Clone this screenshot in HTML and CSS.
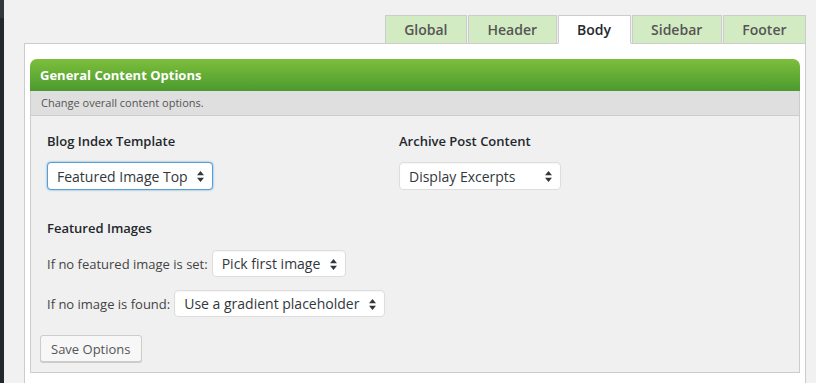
FILE: index.html
```html
<!DOCTYPE html>
<html lang="en">
<head>
  <meta charset="UTF-8">
  <title>Theme Options - Body</title>
  <link rel="stylesheet" href="styles.css">
</head>
<body>
  <div class="adminmenu"></div>

  <div class="wrap">
    <ul class="tabs">
      <li class="tab">Global</li>
      <li class="tab">Header</li>
      <li class="tab active">Body</li>
      <li class="tab">Sidebar</li>
      <li class="tab">Footer</li>
    </ul>

    <div class="panel">
      <div class="box">
        <h3 class="box-title">General Content Options</h3>
        <div class="box-desc">Change overall content options.</div>

        <form class="box-body" onsubmit="return false;">
          <div class="columns">
            <div class="field">
              <h4>Blog Index Template</h4>
              <span class="select-wrap">
                <select class="focused">
                  <option>Featured Image Top</option>
                </select>
                <svg class="arrows" width="7" height="11" viewBox="0 0 7 11"><path d="M3.5 0L7 4.3H0z M3.5 11L0 6.7h7z" fill="#32373c"/></svg>
              </span>
            </div>
            <div class="field">
              <h4>Archive Post Content</h4>
              <span class="select-wrap">
                <select class="archive">
                  <option>Display Excerpts</option>
                </select>
                <svg class="arrows" width="7" height="11" viewBox="0 0 7 11"><path d="M3.5 0L7 4.3H0z M3.5 11L0 6.7h7z" fill="#32373c"/></svg>
              </span>
            </div>
          </div>

          <div class="field images">
            <h4>Featured Images</h4>
            <div class="row">
              <label>If no featured image is set:</label>
              <span class="select-wrap">
                <select>
                  <option>Pick first image</option>
                </select>
                <svg class="arrows" width="7" height="11" viewBox="0 0 7 11"><path d="M3.5 0L7 4.3H0z M3.5 11L0 6.7h7z" fill="#32373c"/></svg>
              </span>
            </div>
            <div class="row">
              <label>If no image is found:</label>
              <span class="select-wrap">
                <select>
                  <option>Use a gradient placeholder</option>
                </select>
                <svg class="arrows" width="7" height="11" viewBox="0 0 7 11"><path d="M3.5 0L7 4.3H0z M3.5 11L0 6.7h7z" fill="#32373c"/></svg>
              </span>
            </div>
          </div>

          <div class="actions">
            <button type="submit">Save Options</button>
          </div>
        </form>
      </div>
    </div>
  </div>
</body>
</html>
```

FILE: styles.css
```css
html, body {
  height: 100%;
}

body {
  margin: 0;
  display: flex;
  background: #f1f1f1;
  font-family: 'Open Sans', 'Noto Sans', sans-serif;
  color: #444;
  overflow: hidden;
}

.adminmenu {
  width: 4px;
  flex-shrink: 0;
  background: linear-gradient(to bottom, #32373c 0, #32373c 18px, #23282d 18px);
}

.wrap {
  flex: 1;
  margin: 15px 10px 0 20px;
}

.tabs {
  list-style: none;
  margin: 0;
  padding: 0;
  display: flex;
  justify-content: flex-end;
  position: relative;
  z-index: 1;
}

.tab {
  height: 27px;
  line-height: 27px;
  padding: 0 18.5px;
  margin-left: 1px;
  margin-bottom: -1px;
  background: #d3ebc3;
  border: 1px solid #ccc;
  font-size: 14px;
  font-weight: 600;
  color: #555;
  cursor: pointer;
}

.tab.active {
  background: #fff;
  color: #23282d;
  border-bottom-color: #fff;
}

.panel {
  background: #fff;
  border: 1px solid #ccc;
  padding: 15px 5px 20px;
}

.box-title {
  margin: 0;
  height: 32px;
  line-height: 32px;
  padding: 0 10px;
  border-radius: 7px 7px 0 0;
  background: linear-gradient(to bottom, #7dbf3b, #4b9a2f);
  color: #fff;
  font-size: 13px;
  font-weight: 700;
}

.box-desc {
  height: 24px;
  line-height: 24px;
  padding: 0 10px;
  background: #dfdfdf;
  border: 1px solid #ccc;
  border-top: none;
  font-size: 11px;
  color: #555;
}

.box-body {
  margin: 0;
  background: #f0f0f0;
  border: 1px solid #ccc;
  border-top: none;
  padding: 16px 0 10px;
}

.columns {
  display: grid;
  grid-template-columns: 352px 1fr;
}

.field {
  padding-left: 16px;
}

.field h4 {
  margin: 0 0 12px;
  font-size: 13px;
  line-height: 18px;
  font-weight: 600;
  color: #23282d;
}

.images {
  margin-top: 29px;
}

.images h4 {
  margin-bottom: 13px;
}

.row {
  display: flex;
  align-items: center;
  gap: 4px;
  margin-bottom: 13px;
}

.row label {
  font-size: 13px;
  color: #444;
}

.select-wrap {
  position: relative;
  display: inline-block;
  vertical-align: top;
}

select {
  -webkit-appearance: none;
  appearance: none;
  display: block;
  height: 28px;
  margin: 0;
  padding: 0 24px 0 9px;
  border: 1px solid #ddd;
  border-radius: 4px;
  background: #fff;
  box-shadow: inset 0 1px 2px rgba(0,0,0,0.04);
  font-family: 'Open Sans', 'Noto Sans', sans-serif;
  font-size: 14px;
  color: #32373c;
}

select.archive {
  width: 162px;
}

.row select {
  height: 27px;
}

select.focused {
  border-color: #5b9dd9;
  box-shadow: 0 0 2px rgba(30,140,190,0.8);
}

.arrows {
  position: absolute;
  right: 9px;
  top: 50%;
  margin-top: -5px;
  pointer-events: none;
}

.actions {
  padding: 5px 0 0 9px;
}

button {
  height: 27px;
  padding: 0 10px;
  border: 1px solid #ccc;
  border-radius: 3px;
  background: #f7f7f7;
  box-shadow: 0 1px 0 #ccc;
  font-family: 'Open Sans', 'Noto Sans', sans-serif;
  font-size: 13px;
  color: #555;
  cursor: pointer;
}
```
